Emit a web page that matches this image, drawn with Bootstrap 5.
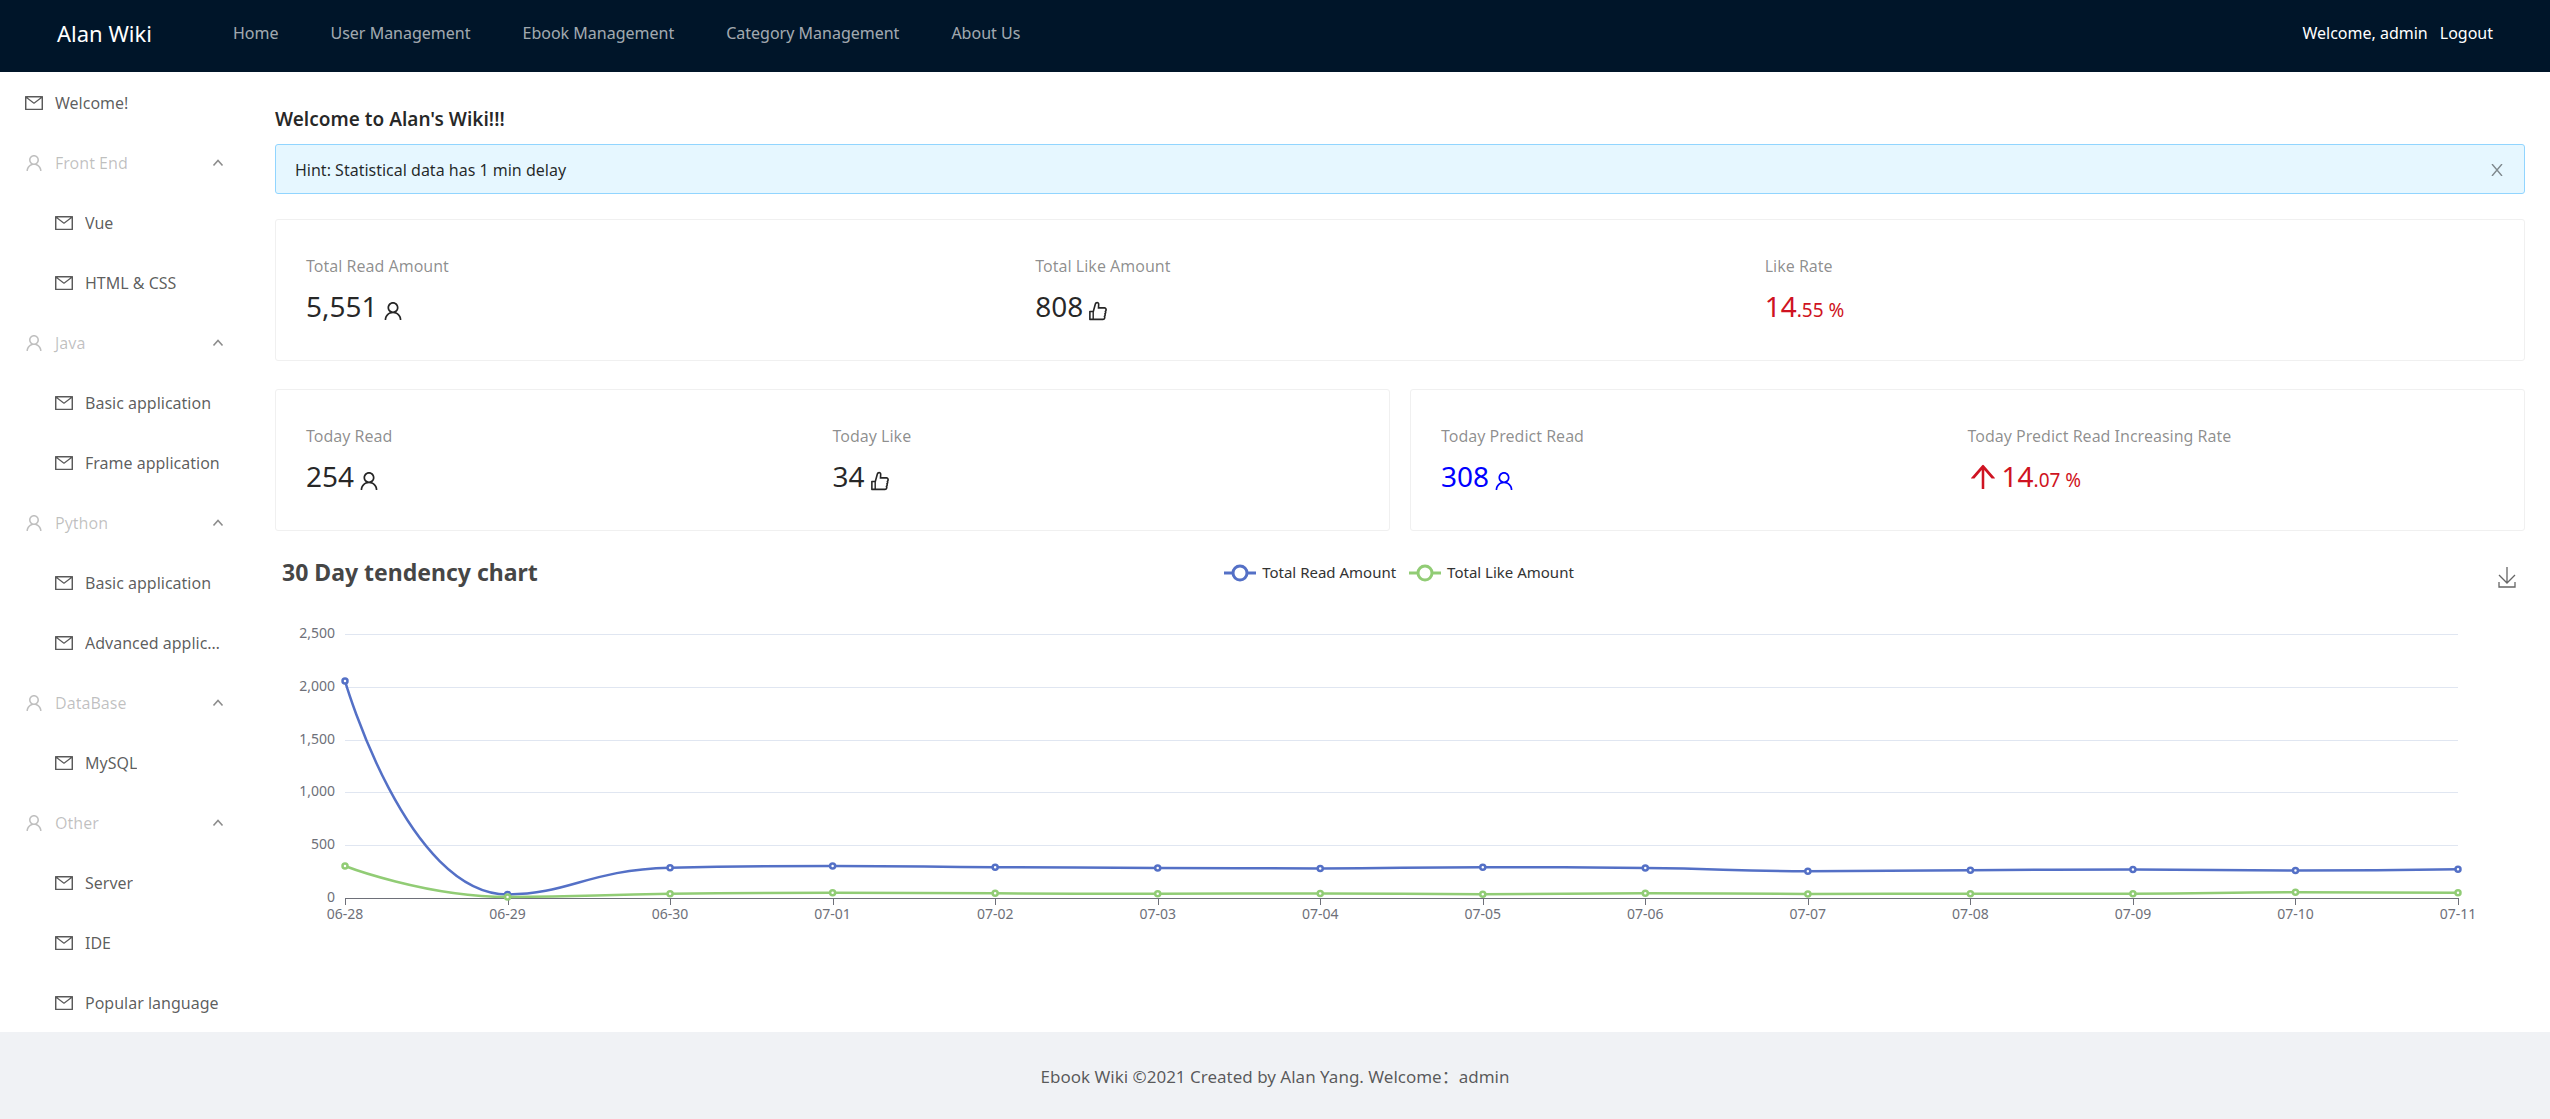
<!DOCTYPE html>
<html lang="en">
<head>
<meta charset="utf-8">
<meta name="viewport" content="width=device-width, initial-scale=1">
<title>Alan Wiki</title>
<link href="https://cdn.jsdelivr.net/npm/bootstrap@5.3.0/dist/css/bootstrap.min.css" rel="stylesheet">
<style>
  body { font-family: "Noto Sans", "Noto Sans CJK SC", sans-serif; font-size: 16px; line-height: 28px; color: rgba(0,0,0,.85); background: #fff; }
  .ico { width: 18px; height: 18px; fill: currentColor; flex: none; }
  .topbar { background: #001529; height: 72px; padding: 0 57px 6px; }
  .topbar .navbar-brand { color: #fff; font-size: 22px; padding: 0; margin: 0 55px 0 0; }
  .topbar .navbar-nav .nav-link { color: rgba(255,255,255,.65); padding: 0 26px; }
  .topbar .navbar-nav .nav-link:hover, .user-link { color: #fff; }
  .side { width: 250px; flex: none; }
  .side a, .side button { display: flex; align-items: center; gap: 12px; width: 100%; height: 60px; padding: 2px 24px 0 25px; border: 0; background: none; text-align: left; text-decoration: none; color: rgba(0,0,0,.65); }
  .side ul a { padding-left: 55px; }
  .side button { color: rgba(0,0,0,.25); }
  .side button .caret { width: 12px; height: 12px; margin-right: 2px; color: rgba(0,0,0,.45); }
  .content-area { padding: 33px 25px 0; }
  .page-title { font-size: 19px; font-weight: 600; line-height: 28px; margin: 0 0 11px; }
  .hint { background: #e6f7ff; border: 1px solid #91d5ff; border-radius: 3px; padding: 11px 19px 9px; margin: 0 0 25px; }
  .hint button { border: 0; background: none; padding: 0; width: 14px; height: 16px; display: flex; align-items: center; color: rgba(0,0,0,.45); }
  .panel { border: 1px solid #f0f0f0; border-radius: 3px; padding: 32px 30px 28px; }
  .two-up { gap: 20px; margin: 28px 0 24px; }
  .stat-name { color: rgba(0,0,0,.45); }
  .stat-num { font-size: 28px; line-height: 52px; height: 52px; display: flex; align-items: baseline; }
  .stat-num small { font-size: 19px; }
  .stat-num .ico { width: 20px; height: 20px; margin: 10px 0 0 5px; align-self: center; }
  .stat-num .lead-ico { width: 30px; height: 30px; margin: 2px 4px 0 0; }
  .red { color: #cf1322; }
  .blue { color: #00f; }
  .chart-head { display: grid; grid-template-columns: 1fr auto 1fr; align-items: start; padding: 0 9px 0 7px; height: 47px; }
  .chart-title { font-size: 23px; font-weight: 700; line-height: 34px; margin: 0; color: #464646; }
  .legend { gap: 13px; font-size: 15px; line-height: 34px; color: #333; }
  .legend svg { width: 32px; height: 20px; margin-right: 6px; }
  .save { border: 0; background: none; padding: 12px 0 0; width: 18px; line-height: 0; }
  #trend { display: block; width: 100%; height: 380px; font-size: 14px; fill: #6e7079; overflow: visible; }
  .foot { background: #f0f2f5; padding: 31px 25px 28px; font-size: 17px; color: rgba(0,0,0,.65); }
</style>
</head>
<body>
<svg class="d-none" aria-hidden="true">
  <symbol id="i-user" viewBox="64 64 896 896"><path d="M858.5 763.6a374 374 0 00-80.6-119.5 375.63 375.63 0 00-119.5-80.6c-.4-.2-.8-.3-1.2-.5C719.5 518 760 444.7 760 362c0-137-111-248-248-248S264 225 264 362c0 82.7 40.5 156 102.8 201.1-.4.2-.8.3-1.2.5-44.8 18.9-85 46-119.5 80.6a375.63 375.63 0 00-80.6 119.5A371.7 371.7 0 00136 901.8a8 8 0 008 8.2h60c4.400 0 7.900-3.500 8-7.800 2-77.200 33-149.500 87.800-204.300 56.700-56.700 132-87.900 212.200-87.900s155.500 31.200 212.200 87.900C779 752.700 810 825 812 902.200c.1 4.400 3.600 7.800 8 7.800h60a8 8 0 008-8.200c-1-47.800-10.900-94.300-29.500-138.200zM512 534c-45.900 0-89.100-17.900-121.600-50.400S340 407.900 340 362c0-45.900 17.900-89.100 50.400-121.600S466.100 190 512 190s89.100 17.900 121.600 50.400S684 316.100 684 362c0 45.900-17.900 89.100-50.400 121.600S557.900 534 512 534z"/></symbol>
  <symbol id="i-mail" viewBox="64 64 896 896"><path d="M928 160H96c-17.700 0-32 14.300-32 32v640c0 17.700 14.300 32 32 32h832c17.700 0 32-14.300 32-32V192c0-17.700-14.300-32-32-32zm-40 110.800V792H136V270.800l-27.600-21.500 39.300-50.500 42.800 33.300h643.100l42.800-33.300 39.300 50.500-27.700 21.500zM833.600 232L512 482 190.400 232l-42.800-33.300-39.300 50.500 27.600 21.500 341.600 265.600a55.990 55.990 0 0068.700 0L888 270.800l27.600-21.500-39.300-50.500-42.700 33.200z"/></symbol>
  <symbol id="i-like" viewBox="64 64 896 896"><path d="M885.900 533.700c16.800-22.200 26.100-49.400 26.100-77.700 0-44.900-25.100-87.400-65.500-111.100a67.670 67.670 0 00-34.300-9.300H572.400l6-122.900c1.400-29.700-9.100-57.900-29.500-79.400A106.620 106.620 0 00471 99.900c-52 0-98 35-111.800 85.100l-85.900 311H144c-17.700 0-32 14.300-32 32v364c0 17.700 14.300 32 32 32h601.300c9.200 0 18.200-1.800 26.500-5.400 47.600-20.300 78.300-66.800 78.300-118.400 0-12.600-1.800-25-5.400-37 16.800-22.200 26.100-49.400 26.100-77.700 0-12.600-1.800-25-5.400-37 16.800-22.200 26.100-49.400 26.100-77.700-.2-12.600-2-25.100-5.600-37.100zM184 852V568h81v284h-81zm636.400-353l-21.900 19 13.900 25.400a56.200 56.200 0 016.900 27.300c0 16.500-7.200 32.200-19.600 43l-21.900 19 13.900 25.400a56.200 56.200 0 016.900 27.300c0 16.500-7.200 32.200-19.600 43l-21.900 19 13.900 25.400a56.200 56.200 0 016.900 27.300c0 22.400-13.200 42.600-33.600 51.800H329V564.800l99.500-360.500a44.100 44.100 0 0142.200-32.300c7.600 0 15.100 2.200 21.100 6.700 9.900 7.400 15.200 18.600 14.600 30.500l-9.600 198.400h314.400C829 418.500 840 436.900 840 456c0 16.500-7.200 32.100-19.600 43z"/></symbol>
  <symbol id="i-up" viewBox="64 64 896 896"><path d="M868 545.500L536.100 163a31.960 31.960 0 00-48.300 0L156 545.500a7.970 7.970 0 006 13.200h81c4.600 0 9-2 12.100-5.500L474 300.900V864c0 4.400 3.600 8 8 8h60c4.400 0 8-3.600 8-8V300.900l218.900 252.300c3 3.500 7.400 5.500 12.100 5.500h81c6.800 0 10.500-8 5.900-13.200z"/></symbol>
  <symbol id="i-caret" viewBox="0 0 12 12"><path d="M1.500 8.500 6 3.500l4.500 5" fill="none" stroke="currentColor" stroke-width="1.600"/></symbol>
</svg>

<header class="topbar navbar navbar-expand flex-nowrap">
  <a class="navbar-brand" href="#">Alan Wiki</a>
  <ul class="navbar-nav me-auto text-nowrap">
    <li class="nav-item"><a class="nav-link" href="#">Home</a></li>
    <li class="nav-item"><a class="nav-link" href="#">User Management</a></li>
    <li class="nav-item"><a class="nav-link" href="#">Ebook Management</a></li>
    <li class="nav-item"><a class="nav-link" href="#">Category Management</a></li>
    <li class="nav-item"><a class="nav-link" href="#">About Us</a></li>
  </ul>
  <div class="d-flex text-nowrap gap-1">
    <a class="user-link text-decoration-none pe-2" href="#">Welcome, admin</a>
    <a class="user-link text-decoration-none" href="#">Logout</a>
  </div>
</header>

<div class="d-flex">
  <nav class="side" aria-label="Categories">
    <a href="#"><svg class="ico"><use href="#i-mail"/></svg><span>Welcome!</span></a>
    <button type="button"><svg class="ico"><use href="#i-user"/></svg><span class="flex-grow-1">Front End</span><svg class="caret"><use href="#i-caret"/></svg></button>
    <ul class="list-unstyled m-0">
      <li><a href="#"><svg class="ico"><use href="#i-mail"/></svg><span class="text-truncate">Vue</span></a></li>
      <li><a href="#"><svg class="ico"><use href="#i-mail"/></svg><span class="text-truncate">HTML &amp; CSS</span></a></li>
    </ul>
    <button type="button"><svg class="ico"><use href="#i-user"/></svg><span class="flex-grow-1">Java</span><svg class="caret"><use href="#i-caret"/></svg></button>
    <ul class="list-unstyled m-0">
      <li><a href="#"><svg class="ico"><use href="#i-mail"/></svg><span class="text-truncate">Basic application</span></a></li>
      <li><a href="#"><svg class="ico"><use href="#i-mail"/></svg><span class="text-truncate">Frame application</span></a></li>
    </ul>
    <button type="button"><svg class="ico"><use href="#i-user"/></svg><span class="flex-grow-1">Python</span><svg class="caret"><use href="#i-caret"/></svg></button>
    <ul class="list-unstyled m-0">
      <li><a href="#"><svg class="ico"><use href="#i-mail"/></svg><span class="text-truncate">Basic application</span></a></li>
      <li><a href="#"><svg class="ico"><use href="#i-mail"/></svg><span class="text-truncate">Advanced application</span></a></li>
    </ul>
    <button type="button"><svg class="ico"><use href="#i-user"/></svg><span class="flex-grow-1">DataBase</span><svg class="caret"><use href="#i-caret"/></svg></button>
    <ul class="list-unstyled m-0">
      <li><a href="#"><svg class="ico"><use href="#i-mail"/></svg><span class="text-truncate">MySQL</span></a></li>
    </ul>
    <button type="button"><svg class="ico"><use href="#i-user"/></svg><span class="flex-grow-1">Other</span><svg class="caret"><use href="#i-caret"/></svg></button>
    <ul class="list-unstyled m-0">
      <li><a href="#"><svg class="ico"><use href="#i-mail"/></svg><span class="text-truncate">Server</span></a></li>
      <li><a href="#"><svg class="ico"><use href="#i-mail"/></svg><span class="text-truncate">IDE</span></a></li>
      <li><a href="#"><svg class="ico"><use href="#i-mail"/></svg><span class="text-truncate">Popular language</span></a></li>
    </ul>
  </nav>

  <main class="content-area flex-grow-1">
    <h1 class="page-title">Welcome to Alan's Wiki!!!</h1>
    <div class="hint d-flex align-items-center justify-content-between" role="alert">
      <span>Hint: Statistical data has 1 min delay</span>
      <button type="button" aria-label="Close"><svg width="12" height="12" viewBox="0 0 12 12"><path d="M1 0 11 12M11 0 1 12" stroke="currentColor" stroke-width="1.400"/></svg></button>
    </div>

    <section class="panel">
      <div class="row g-0">
        <div class="col-4"><div class="stat-name">Total Read Amount</div><div class="stat-num">5,551<svg class="ico"><use href="#i-user"/></svg></div></div>
        <div class="col-4"><div class="stat-name">Total Like Amount</div><div class="stat-num">808<svg class="ico"><use href="#i-like"/></svg></div></div>
        <div class="col-4"><div class="stat-name">Like Rate</div><div class="stat-num red">14<small>.55 %</small></div></div>
      </div>
    </section>

    <div class="two-up d-flex">
      <section class="panel w-50">
        <div class="row g-0">
          <div class="col-6"><div class="stat-name">Today Read</div><div class="stat-num">254<svg class="ico"><use href="#i-user"/></svg></div></div>
          <div class="col-6"><div class="stat-name">Today Like</div><div class="stat-num">34<svg class="ico"><use href="#i-like"/></svg></div></div>
        </div>
      </section>
      <section class="panel w-50">
        <div class="row g-0">
          <div class="col-6"><div class="stat-name">Today Predict Read</div><div class="stat-num blue">308<svg class="ico"><use href="#i-user"/></svg></div></div>
          <div class="col-6"><div class="stat-name">Today Predict Read Increasing Rate</div><div class="stat-num red"><svg class="ico lead-ico"><use href="#i-up"/></svg>14<small>.07 %</small></div></div>
        </div>
      </section>
    </div>

    <section>
      <div class="chart-head">
        <h2 class="chart-title">30 Day tendency chart</h2>
        <div class="legend d-flex">
          <span class="d-flex align-items-center"><svg viewBox="0 0 32 20"><path d="M0 11h32" stroke="#5470c6" stroke-width="3"/><circle cx="16" cy="11" r="7" fill="#fff" stroke="#5470c6" stroke-width="3"/></svg><span>Total Read Amount</span></span>
          <span class="d-flex align-items-center"><svg viewBox="0 0 32 20"><path d="M0 11h32" stroke="#91cc75" stroke-width="3"/><circle cx="16" cy="11" r="7" fill="#fff" stroke="#91cc75" stroke-width="3"/></svg><span>Total Like Amount</span></span>
        </div>
        <button class="save ms-auto" type="button" aria-label="Save as image"><svg width="18" height="21" viewBox="0 0 18 21"><path d="M9 0v16M1 8l8 8 8-8M1 15v5h16v-5" fill="none" stroke="#666" stroke-width="1.300"/></svg></button>
      </div>
      <svg id="trend" role="img" aria-label="Daily total read and like amounts"></svg>
    </section>
  </main>
</div>

<footer class="foot text-center">Ebook Wiki ©2021 Created by Alan Yang. Welcome：admin</footer>

<script src="https://cdn.jsdelivr.net/npm/bootstrap@5.3.0/dist/js/bootstrap.bundle.min.js"></script>
<script>
  const days = ['06-28','06-29','06-30','07-01','07-02','07-03','07-04','07-05','07-06','07-07','07-08','07-09','07-10','07-11'];
  const reads = [2056, 34, 286, 303, 292, 285, 280, 291, 285, 254, 263, 269, 260, 272];
  const likes = [303, 10, 40, 50, 44, 40, 43, 36, 45, 39, 41, 41, 54, 50];
  const plot = { left: 70, right: 67, top: 32, height: 264, max: 2500 };

  // Smooth curve whose control points never leave the span between neighbours
  function smooth(p) {
    const clamp = (v, a, b) => Math.max(Math.min(a, b), Math.min(v, Math.max(a, b)));
    let d = `M${p[0]}`, out = p[0];
    for (let i = 1; i < p.length; i++) {
      const a = p[i - 1], b = p[i], c = p[i + 1];
      let into = b, next = b;
      if (c) {
        const l0 = Math.hypot(b[0] - a[0], b[1] - a[1]), l1 = Math.hypot(c[0] - b[0], c[1] - b[1]);
        next = [0, 1].map(k => clamp(b[k] + (c[k] - a[k]) * .5 * l1 / (l0 + l1), b[k], c[k]));
        into = [0, 1].map(k => clamp(b[k] - (next[k] - b[k]) * l0 / l1, a[k], b[k]));
        next = [0, 1].map(k => b[k] + (b[k] - into[k]) * l1 / l0);
      }
      d += `C${out} ${into} ${b}`;
      out = next;
    }
    return d;
  }

  function draw() {
    const svg = document.getElementById('trend');
    const right = svg.clientWidth - plot.right;
    const base = plot.top + plot.height;
    const x = i => plot.left + i * (right - plot.left) / (days.length - 1);
    const y = v => base - v / plot.max * plot.height;
    let s = '';
    for (let v = 0; v <= plot.max; v += 500) {
      const ly = Math.round(y(v)) + .5;
      s += `<path d="M${plot.left} ${ly}H${right}" stroke="${v ? '#e0e6f1' : '#6e7079'}"/>`;
      s += `<text x="${plot.left - 10}" y="${ly + 3}" text-anchor="end">${v.toLocaleString('en-US')}</text>`;
    }
    days.forEach((t, i) => {
      s += `<path d="M${Math.round(x(i)) + .5} ${base}v7" stroke="#6e7079"/>`;
      s += `<text x="${x(i)}" y="${base + 21}" text-anchor="middle">${t}</text>`;
    });
    [[reads, '#5470c6'], [likes, '#91cc75']].forEach(([data, color]) => {
      const pts = data.map((v, i) => [x(i), y(v)]);
      s += `<path d="${smooth(pts)}" fill="none" stroke="${color}" stroke-width="2.500"/>`;
      pts.forEach(([px, py]) => s += `<circle cx="${px}" cy="${py}" r="2.500" fill="#fff" stroke="${color}" stroke-width="2.500"/>`);
    });
    svg.innerHTML = s;
  }
  draw();
  window.addEventListener('resize', draw);
</script>
</body>
</html>
